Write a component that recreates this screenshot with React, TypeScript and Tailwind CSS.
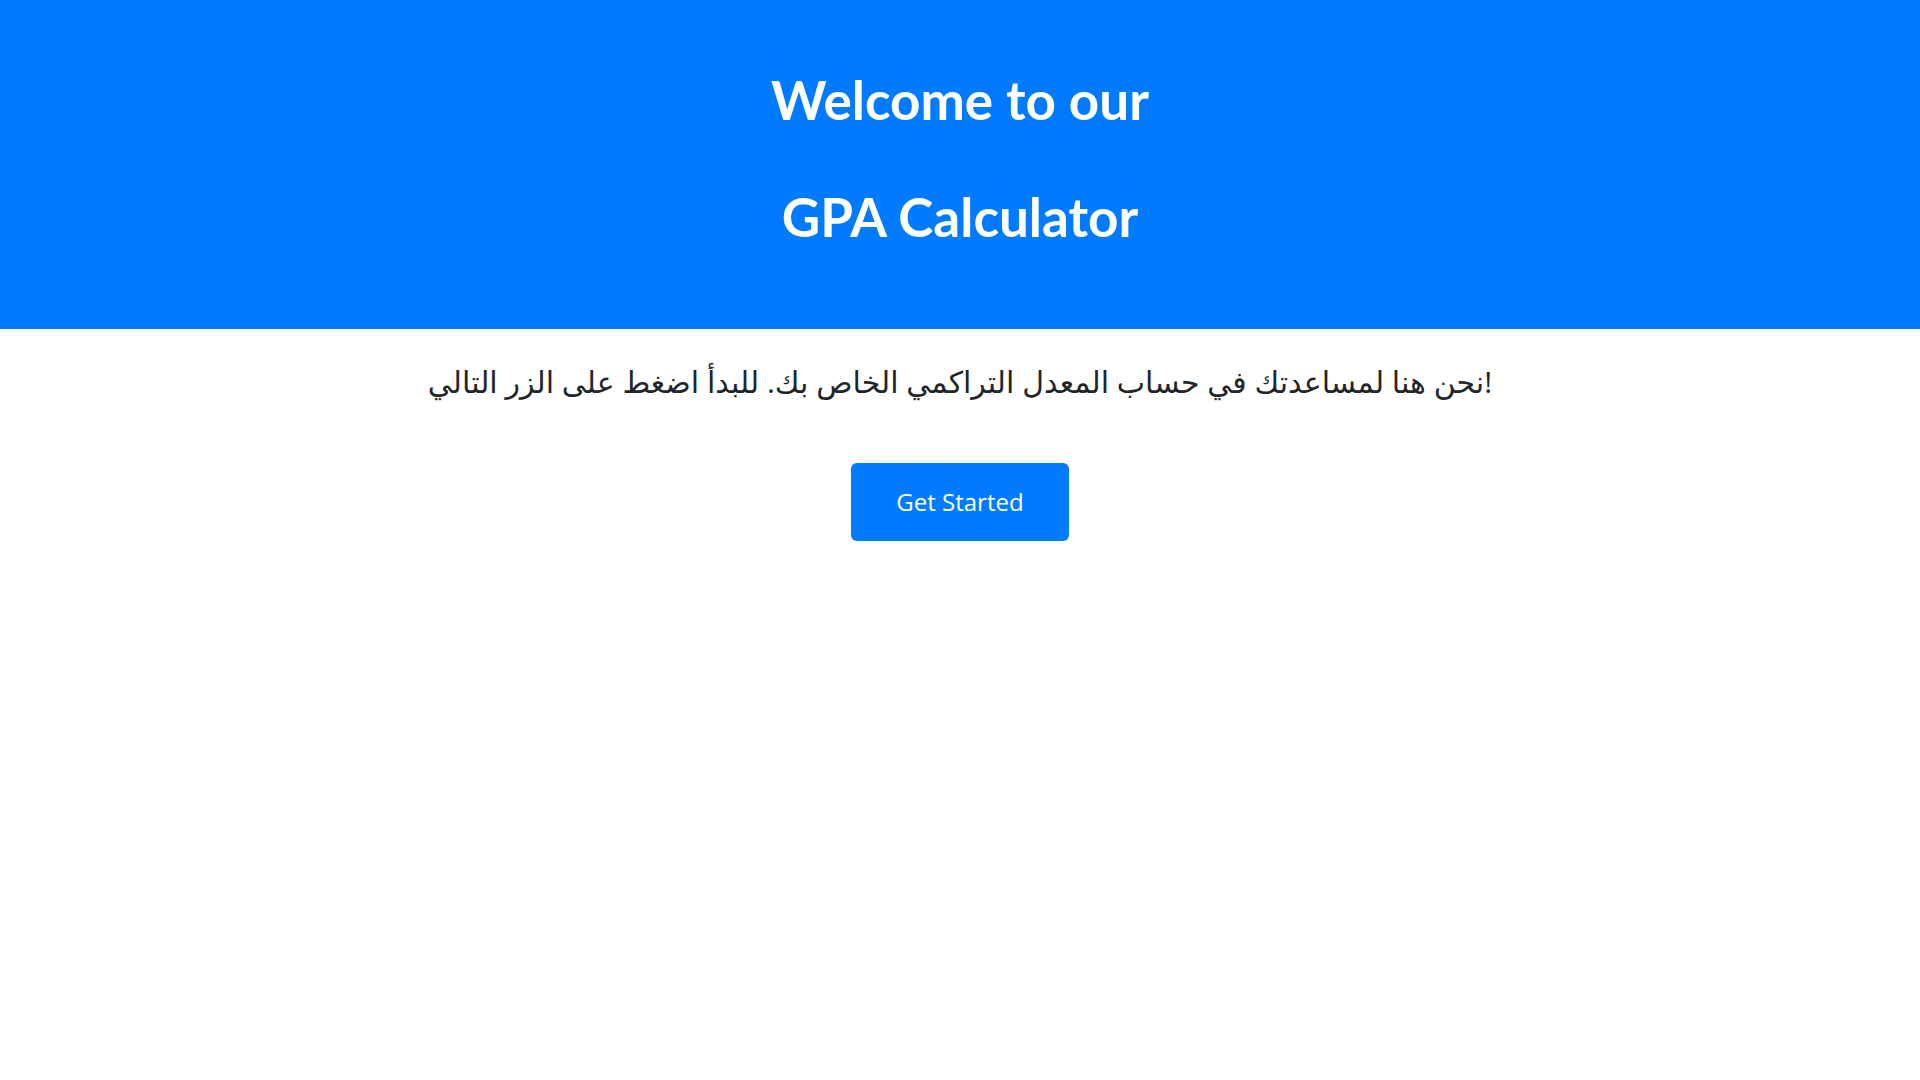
export default function App() {
  return (
    <div className="min-h-screen bg-white font-['Open_Sans','DejaVu_Sans',sans-serif]">
      <header className="flex h-[329px] flex-col items-center bg-[#007bff] pt-[66px] text-white">
        <h1 className="font-['Lato',sans-serif] text-[53px] leading-[67px] font-bold">Welcome to our</h1>
        <h1 className="mt-[50px] font-['Lato',sans-serif] text-[53px] leading-[67px] font-bold">GPA Calculator</h1>
      </header>

      <main className="flex flex-col items-center">
        <p dir="rtl" className="mt-[32px] text-[30px] leading-[42px] text-[#212529]">
          !نحن هنا لمساعدتك في حساب المعدل التراكمي الخاص بك. للبدأ اضغط على الزر التالي
        </p>
        <button className="mt-[60px] h-[78px] w-[218px] rounded-[6px] bg-[#007bff] text-[24px] text-white">
          Get Started
        </button>
      </main>
    </div>
  );
}
